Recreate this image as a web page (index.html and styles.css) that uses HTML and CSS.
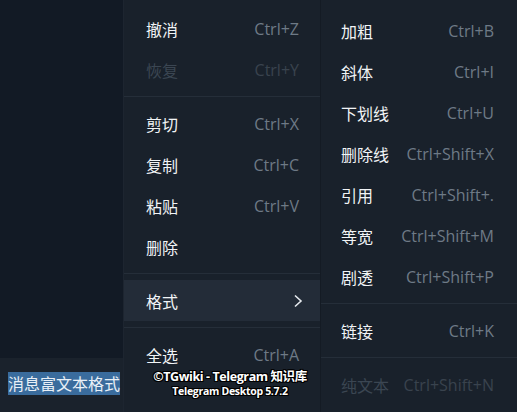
FILE: index.html
```html
<!DOCTYPE html>
<html lang="zh">
<head>
<meta charset="utf-8">
<link rel="stylesheet" href="styles.css">
</head>
<body>
<div class="app">
  <div class="chat"></div>
  <div class="composer">
    <span class="selected">消息富文本格式</span>
  </div>

  <div class="menu menu-main">
    <div class="item"><span class="label">撤消</span><span class="key">Ctrl+Z</span></div>
    <div class="item disabled"><span class="label">恢复</span><span class="key">Ctrl+Y</span></div>
    <div class="sep"></div>
    <div class="item"><span class="label">剪切</span><span class="key">Ctrl+X</span></div>
    <div class="item"><span class="label">复制</span><span class="key">Ctrl+C</span></div>
    <div class="item"><span class="label">粘贴</span><span class="key">Ctrl+V</span></div>
    <div class="item"><span class="label">删除</span></div>
    <div class="sep"></div>
    <div class="item active"><span class="label">格式</span>
      <svg class="chev" width="10" height="14" viewBox="0 0 10 14"><path d="M2 1.5 L8 7 L2 12.5" fill="none" stroke="#e6eaee" stroke-width="1.6"/></svg>
    </div>
    <div class="sep"></div>
    <div class="item"><span class="label">全选</span><span class="key">Ctrl+A</span></div>
  </div>

  <div class="menu menu-sub">
    <div class="item"><span class="label">加粗</span><span class="key">Ctrl+B</span></div>
    <div class="item"><span class="label">斜体</span><span class="key">Ctrl+I</span></div>
    <div class="item"><span class="label">下划线</span><span class="key">Ctrl+U</span></div>
    <div class="item"><span class="label">删除线</span><span class="key">Ctrl+Shift+X</span></div>
    <div class="item"><span class="label">引用</span><span class="key">Ctrl+Shift+.</span></div>
    <div class="item"><span class="label">等宽</span><span class="key">Ctrl+Shift+M</span></div>
    <div class="item"><span class="label">剧透</span><span class="key">Ctrl+Shift+P</span></div>
    <div class="sep"></div>
    <div class="item"><span class="label">链接</span><span class="key">Ctrl+K</span></div>
    <div class="sep"></div>
    <div class="item disabled"><span class="label">纯文本</span><span class="key">Ctrl+Shift+N</span></div>
  </div>

  <div class="watermark">
    <div class="wm1">©TGwiki - Telegram 知识库</div>
    <div class="wm2">Telegram Desktop 5.7.2</div>
  </div>
</div>
</body>
</html>
```

FILE: styles.css
```css
* { box-sizing: border-box; }
html, body { margin: 0; padding: 0; }
body {
  width: 517px;
  height: 412px;
  overflow: hidden;
  background: #121a25;
  font-family: "Open Sans", "Noto Sans CJK SC", sans-serif;
}
.app {
  position: relative;
  width: 517px;
  height: 412px;
  display: flex;
  flex-direction: column;
}
.chat {
  height: 358px;
  background: #121a25;
}
.composer {
  flex: 1;
  background: #1a222c;
  padding: 14px 0 0 8px;
}
.selected {
  display: inline-block;
  background: #3a6c9d;
  color: #e9f0f7;
  font-family: "Noto Sans CJK SC", sans-serif;
  font-size: 16px;
  line-height: 23px;
}
.menu {
  position: absolute;
  top: 0;
  background: #19212b;
  display: flex;
  flex-direction: column;
}
.menu-main {
  left: 124px;
  width: 196px;
  height: 412px;
  padding-top: 8px;
  box-shadow: -1px 0 0 #1d2530;
}
.menu-sub {
  left: 320px;
  width: 200px;
  height: 412px;
  padding-top: 10px;
  border-left: 1px solid #141b24;
}
.item {
  height: 41px;
  display: flex;
  align-items: center;
  justify-content: space-between;
  padding: 0 21px 0 22px;
}
.menu-sub .item { padding: 0 26px 0 20px; }
.label {
  font-family: "Noto Sans CJK SC", sans-serif;
  font-size: 16px;
  color: #f1f4f6;
}
.key {
  font-family: "Open Sans", sans-serif;
  font-size: 16px;
  color: #6e7a86;
}
.disabled .label { color: #3b4652; }
.disabled .key { color: #39434e; }
.active { background: #232c38; }
.chev { margin-right: -4px; }
.sep {
  height: 13px;
  display: flex;
  align-items: center;
}
.sep::before {
  content: "";
  display: block;
  width: 100%;
  height: 1px;
  background: #252e39;
}
.watermark {
  position: absolute;
  left: 140px;
  top: 368px;
  width: 180px;
  text-align: center;
  color: #ffffff;
  font-family: "Open Sans", "Noto Sans CJK SC", sans-serif;
  font-weight: 700;
  text-shadow: 1px 0 0 #000, -1px 0 0 #000, 0 1px 0 #000, 0 -1px 0 #000, 1px 1px 0 #000, -1px -1px 0 #000, 1px -1px 0 #000, -1px 1px 0 #000;
}
.wm1 { font-size: 12.5px; line-height: 17px; letter-spacing: -0.4px; }
.wm2 { font-size: 10.5px; line-height: 13px; letter-spacing: -0.3px; }
```
